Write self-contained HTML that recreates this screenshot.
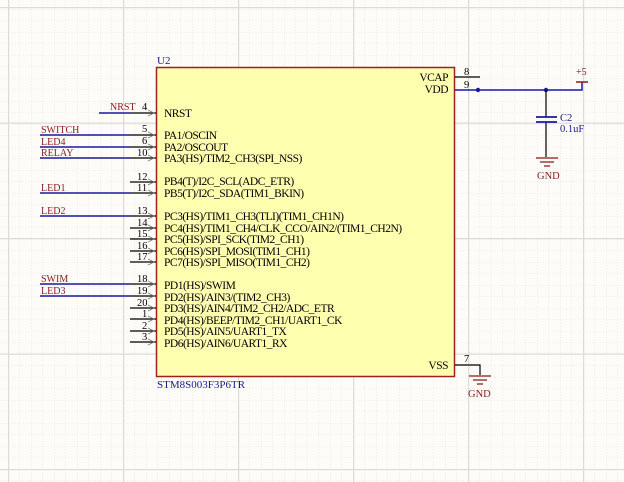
<!DOCTYPE html><html><head><style>body{margin:0;background:#fdfcf9}svg{display:block}</style></head><body>
<svg width="624" height="482" xmlns="http://www.w3.org/2000/svg" font-family="Liberation Serif, serif">
<defs>
<pattern id="mn" width="11.5" height="11.5" patternUnits="userSpaceOnUse" x="8" y="9">
<path d="M0 0H11.5M0 0V11.5" stroke="#e6e6e2" stroke-width="1" stroke-dasharray="1.5 1.5" fill="none"/></pattern>
<pattern id="mj" width="115" height="115.5" patternUnits="userSpaceOnUse" x="8" y="7">
<path d="M0 0.5H115M0.5 0V115.5" stroke="#dcdcd8" stroke-width="1.5" fill="none"/></pattern>
</defs>
<rect width="624" height="482" fill="url(#mn)"/>
<rect width="624" height="482" fill="url(#mj)"/>
<rect x="156.5" y="67.5" width="298" height="309" fill="#ffffb0" stroke="#a02020" stroke-width="1.5"/>
<text x="157" y="64" font-size="11" fill="#1a1a8c">U2</text>
<text x="157" y="388" font-size="11" fill="#1a1a8c">STM8S003F3P6TR</text>
<g font-size="11.5" fill="#000" letter-spacing="-0.5">
<text x="164" y="117">NRST</text>
<text x="164" y="139">PA1/OSCIN</text>
<text x="164" y="151">PA2/OSCOUT</text>
<text x="164" y="162">PA3(HS)/TIM2_CH3(SPI_NSS)</text>
<text x="164" y="185">PB4(T)/I2C_SCL(ADC_ETR)</text>
<text x="164" y="197">PB5(T)/I2C_SDA(TIM1_BKIN)</text>
<text x="164" y="220">PC3(HS)/TIM1_CH3(TLI)(TIM1_CH1N)</text>
<text x="164" y="232">PC4(HS)/TIM1_CH4/CLK_CCO/AIN2/(TIM1_CH2N)</text>
<text x="164" y="243">PC5(HS)/SPI_SCK(TIM2_CH1)</text>
<text x="164" y="255">PC6(HS)/SPI_MOSI(TIM1_CH1)</text>
<text x="164" y="266">PC7(HS)/SPI_MISO(TIM1_CH2)</text>
<text x="164" y="289">PD1(HS)/SWIM</text>
<text x="164" y="301">PD2(HS)/AIN3/(TIM2_CH3)</text>
<text x="164" y="312">PD3(HS)/AIN4/TIM2_CH2/ADC_ETR</text>
<text x="164" y="324">PD4(HS)/BEEP/TIM2_CH1/UART1_CK</text>
<text x="164" y="335">PD5(HS)/AIN5/UART1_TX</text>
<text x="164" y="347">PD6(HS)/AIN6/UART1_RX</text>
<text x="448" y="81" text-anchor="end">VCAP</text>
<text x="448" y="93" text-anchor="end">VDD</text>
<text x="448" y="369" text-anchor="end">VSS</text>
</g>
<g stroke="#000" stroke-width="1.2" fill="none">
<path d="M130 113H156M130 135H156M130 147H156M130 158H156M130 182H156M130 193H156M130 216H156M130 228H156M130 239H156M130 251H156M130 262H156M130 284H156M130 296H156M130 308H156M130 319H156M130 331H156M130 342H156"/>
<path d="M455 77H480M455 365H480V375"/>
</g>
<g fill="none" stroke="#777" stroke-width="0.8">
<path d="M148 110l6 3-6 3M148 132l6 3-6 3M148 144l6 3-6 3M148 155l6 3-6 3M148 179l6 3-6 3M148 190l6 3-6 3M148 213l6 3-6 3M148 225l6 3-6 3M148 236l6 3-6 3M148 248l6 3-6 3M148 259l6 3-6 3M148 281l6 3-6 3M148 293l6 3-6 3M148 305l6 3-6 3M148 316l6 3-6 3M148 328l6 3-6 3M148 339l6 3-6 3"/>
</g>
<g font-size="10.5" fill="#000">
<text x="142" y="110">4</text><text x="142" y="132">5</text><text x="142" y="144">6</text><text x="137" y="156">10</text>
<text x="137" y="180">12</text><text x="137" y="191">11</text><text x="137" y="214">13</text><text x="137" y="226">14</text>
<text x="137" y="237">15</text><text x="137" y="249">16</text><text x="137" y="260">17</text><text x="137" y="282">18</text>
<text x="137" y="294">19</text><text x="137" y="306">20</text><text x="142" y="317">1</text><text x="142" y="329">2</text><text x="142" y="340">3</text>
<text x="464" y="75">8</text><text x="464" y="88">9</text><text x="464" y="362">7</text>
</g>
<g stroke="#1a1a9c" stroke-width="1.5" fill="none">
<path d="M99 113H130M40 135H130M40 147H130M40 158H130M40 193H130M40 216H130M40 284H130M40 296H130"/>
<path d="M455 90H582V82"/>
</g>
<g fill="#8c1a1a" font-size="10">
<text x="110" y="110">NRST</text>
<text x="41" y="133">SWITCH</text>
<text x="41" y="145">LED4</text>
<text x="41" y="156">RELAY</text>
<text x="41" y="191">LED1</text>
<text x="41" y="214">LED2</text>
<text x="41" y="282">SWIM</text>
<text x="41" y="294">LED3</text>
<text x="576" y="75">+5</text>
</g>
<path d="M576 82H588" stroke="#8c1a1a" stroke-width="1.5"/>
<circle cx="478" cy="90" r="2.2" fill="#1a1a9c"/><circle cx="546" cy="90" r="2.2" fill="#1a1a9c"/>
<path d="M546 90V117M546 122V157" stroke="#000" stroke-width="1.2" fill="none"/>
<path d="M536 117H557M536 122H557" stroke="#1a1a9c" stroke-width="1.8"/>
<text x="560" y="121" font-size="10.5" fill="#1a1a8c">C2</text>
<text x="560" y="132" font-size="10.5" fill="#1a1a8c">0.1uF</text>
<g stroke="#8c1a1a" stroke-width="1.2"><path d="M536 158H558M540 162H554M544 166H550"/><path d="M469 376H491M473 380H487M477 384H483"/></g>
<text x="537" y="179" font-size="10.5" fill="#8c1a1a">GND</text>
<text x="468" y="397" font-size="10.5" fill="#8c1a1a">GND</text>
</svg></body></html>
